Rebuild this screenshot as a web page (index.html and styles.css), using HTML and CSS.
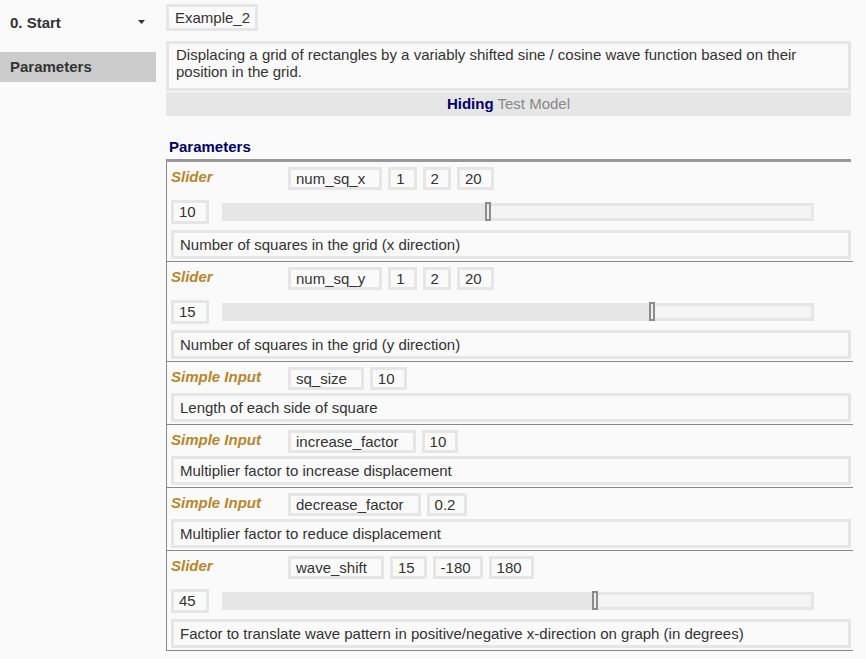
FILE: index.html
```html
<!DOCTYPE html>
<html>
<head>
<meta charset="utf-8">
<link rel="stylesheet" href="styles.css">
</head>
<body>
<div class="app">
  <nav class="sidebar">
    <div class="nav-head"><span>0. Start</span><svg class="caret" width="7" height="4" viewBox="0 0 7 4"><polygon points="0,0 7,0 3.5,4" fill="#333"/></svg></div>
    <div class="nav-item active">Parameters</div>
  </nav>
  <main class="main">
    <div class="box title">Example_2</div>
    <div class="box desc">Displacing a grid of rectangles by a variably shifted sine / cosine wave function based on their position in the grid.</div>
    <div class="toggle-bar"><b>Hiding</b> Test Model</div>
    <h2 class="section-title">Parameters</h2>

    <div class="param slider">
      <div class="row"><span class="kind">Slider</span><span class="box name">num_sq_x</span><span class="box val">1</span><span class="box val">2</span><span class="box val">20</span></div>
      <div class="slide-row"><span class="box cur">10</span><div class="track"><div class="fill" style="width:44.37%"></div><div class="thumb" style="left:44.37%"></div></div></div>
      <div class="box help">Number of squares in the grid (x direction)</div>
    </div>

    <div class="param slider">
      <div class="row"><span class="kind">Slider</span><span class="box name">num_sq_y</span><span class="box val">1</span><span class="box val">2</span><span class="box val">20</span></div>
      <div class="slide-row"><span class="box cur">15</span><div class="track"><div class="fill" style="width:72.3%"></div><div class="thumb" style="left:72.3%"></div></div></div>
      <div class="box help">Number of squares in the grid (y direction)</div>
    </div>

    <div class="param simple">
      <div class="row"><span class="kind">Simple Input</span><span class="box name">sq_size</span><span class="box val">10</span></div>
      <div class="box help">Length of each side of square</div>
    </div>

    <div class="param simple">
      <div class="row"><span class="kind">Simple Input</span><span class="box name">increase_factor</span><span class="box val">10</span></div>
      <div class="box help">Multiplier factor to increase displacement</div>
    </div>

    <div class="param simple">
      <div class="row"><span class="kind">Simple Input</span><span class="box name">decrease_factor</span><span class="box val">0.2</span></div>
      <div class="box help">Multiplier factor to reduce displacement</div>
    </div>

    <div class="param slider">
      <div class="row"><span class="kind">Slider</span><span class="box name">wave_shift</span><span class="box val">15</span><span class="box val">-180</span><span class="box val">180</span></div>
      <div class="slide-row"><span class="box cur">45</span><div class="track"><div class="fill" style="width:62.63%"></div><div class="thumb" style="left:62.63%"></div></div></div>
      <div class="box help">Factor to translate wave pattern in positive/negative x-direction on graph (in degrees)</div>
    </div>
  </main>
</div>
</body>
</html>
```
FILE: styles.css
```css
html, body {
  margin: 0;
  background: #fafafa;
}
body {
  font-family: "Liberation Sans", Arial, sans-serif;
  font-size: 15px;
  line-height: 17px;
  color: #333;
}
.app {
  display: flex;
  gap: 10px;
  align-items: flex-start;
}
.sidebar {
  width: 156px;
  flex: none;
}
.nav-head {
  height: 44px;
  display: flex;
  align-items: center;
  justify-content: space-between;
  padding: 0 11px 0 10px;
  font-weight: bold;
  margin-bottom: 8px;
}
.caret {
  display: block;
}
.nav-item {
  height: 30px;
  line-height: 30px;
  padding-left: 10px;
  font-weight: bold;
}
.nav-item.active {
  background: #ccc;
}
.main {
  width: 687px;
  padding-top: 4px;
}
.box {
  border: 3px solid #e6e6e6;
}
.title {
  width: fit-content;
  padding: 2px 5px 2px 6px;
}
.desc {
  margin: 10px 2px 0 0;
  padding: 2px 7px 8px;
}
.toggle-bar {
  margin: 1px 2px 0 0;
  height: 24px;
  line-height: 24px;
  background: #e6e6e6;
  text-align: center;
  color: #888;
}
.toggle-bar b {
  color: #000066;
}
.section-title {
  margin: 22px 2px 0 0;
  padding: 0 3px 4px;
  font-size: 15px;
  line-height: 17px;
  color: #000066;
  border-bottom: 3px solid #999;
}
.param {
  border-left: 1px solid #888;
  border-bottom: 1px solid #888;
  padding: 5px 2px 2px 4px;
}
.param.slider {
  padding-bottom: 2px;
}
.row {
  display: flex;
  gap: 6px;
  height: 23px;
}
.kind {
  width: 111px;
  flex: none;
  font-style: italic;
  font-weight: bold;
  color: #b8862b;
  margin-top: 1px;
}
.row .box {
  line-height: 17px;
  padding: 0 9px 0 5px;
}
.row .name {
  padding-right: 14px;
}
.slide-row {
  display: flex;
  align-items: center;
  margin-top: 10px;
  height: 24px;
}
.cur {
  line-height: 18px;
  padding: 0 10px 0 5px;
}
.track {
  position: relative;
  flex: 1;
  margin: 0 37px 0 13px;
  height: 12px;
  border: 3px solid #e6e6e6;
  background: #f4f4f4;
}
.fill {
  position: absolute;
  left: 0;
  top: 0;
  bottom: 0;
  background: #e6e6e6;
}
.thumb {
  position: absolute;
  top: -4px;
  width: 2px;
  height: 15px;
  border: 2px solid #8c8c8c;
  background: #eee;
}
.help {
  margin-top: 6px;
  padding: 3px 7px 3px 6px;
}
.simple .help {
  margin-top: 3px;
}
```
